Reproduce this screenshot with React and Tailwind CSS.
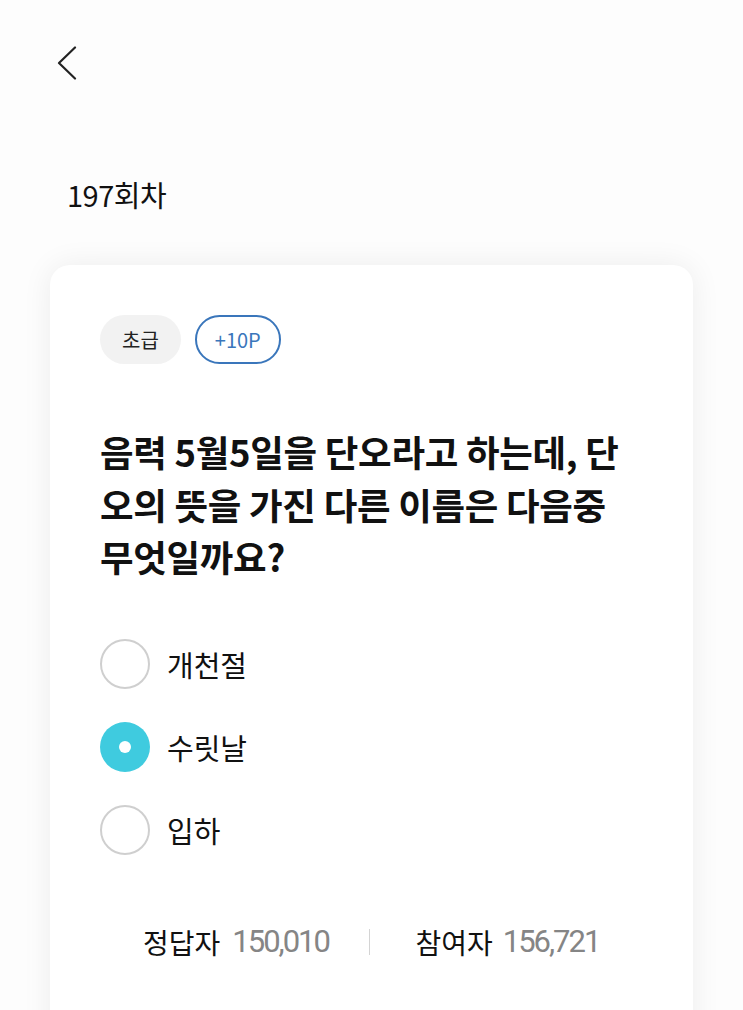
export default function App() {
  const font = { fontFamily: '"Noto Sans CJK KR", "Noto Sans", sans-serif' };
  const num = { fontFamily: '"Roboto", "Noto Sans", sans-serif', letterSpacing: '-2px' };
  const options = [
    { label: "개천절", selected: false },
    { label: "수릿날", selected: true },
    { label: "입하", selected: false },
  ];
  return (
    <div className="w-[743px] h-[1010px] overflow-hidden bg-[#fdfdfd] text-[#111]" style={font}>
      <div className="pl-[56px] pt-[46px]">
        <svg width="22" height="34" viewBox="0 0 22 34" fill="none">
          <path d="M19 1.5 L3 17 L19 32.5" stroke="#222" strokeWidth="2.2" strokeLinecap="round" strokeLinejoin="round" />
        </svg>
      </div>
      <div className="pl-[67px] mt-[96px] text-[29px] leading-[36px] tracking-[-0.5px]">197회차</div>
      <div className="mx-[50px] mt-[53px] bg-white rounded-[20px] shadow-[0_0_30px_rgba(0,0,0,0.07)] pl-[50px] pr-[30px] pt-[50px] pb-[40px] h-[800px]">
        <div className="flex gap-[14px]">
          <div className="h-[49px] px-[22px] rounded-full bg-[#f2f2f2] flex items-center text-[20px] text-[#222]">초급</div>
          <div className="h-[49px] px-[18px] rounded-full border-2 border-[#3a76bb] flex items-center text-[20px] text-[#3a76bb]">+10P</div>
        </div>
        <div className="mt-[62px] text-[36.5px] font-bold leading-[52.5px] tracking-[-0.3px] text-[#111]">
          음력 5월5일을 단오라고 하는데, 단<br />오의 뜻을 가진 다른 이름은 다음중<br />무엇일까요?
        </div>
        <div className="mt-[55px] flex flex-col gap-[33px]">
          {options.map((o) => (
            <div key={o.label} className="flex items-center gap-[17px]">
              {o.selected ? (
                <div className="w-[50px] h-[50px] rounded-full bg-[#3fcbdf] flex items-center justify-center">
                  <div className="w-[12px] h-[12px] rounded-full bg-white" />
                </div>
              ) : (
                <div className="w-[50px] h-[50px] rounded-full border-2 border-[#cfcfcf] bg-white" />
              )}
              <div className="text-[29px] leading-[36px] text-[#111]">{o.label}</div>
            </div>
          ))}
        </div>
        <div className="mt-[69px] flex items-center pl-[43px] text-[28px] leading-[36px]">
          <span className="text-[#111]">정답자</span>
          <span className="ml-[12px] text-[31px] font-normal text-[#858585]" style={num}>150,010</span>
          <span className="ml-[40px] mr-[45px] w-[1.5px] h-[26px] bg-[#d4d4d4]" />
          <span className="text-[#111]">참여자</span>
          <span className="ml-[10px] text-[31px] font-normal text-[#858585]" style={num}>156,721</span>
        </div>
      </div>
    </div>
  );
}
